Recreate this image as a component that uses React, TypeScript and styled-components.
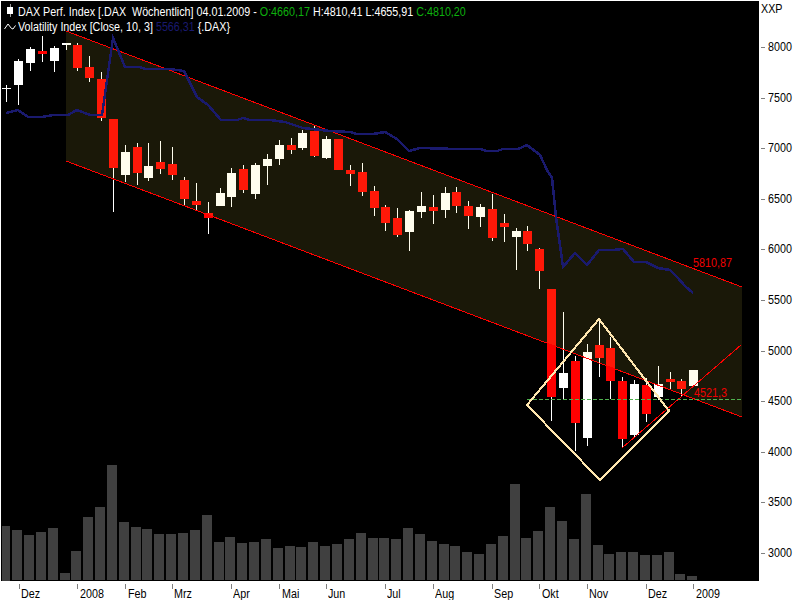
import styled, { createGlobalStyle } from "styled-components";

const GlobalStyle = createGlobalStyle`
    html, body {
        margin: 0;
        background: white;
    }
`;

const Screen = styled.div`
    width: 799px;
    height: 599px;
    padding: 1px 0 0 1px;
    display: grid;
    grid-template-columns: 758px 41px;
    grid-template-rows: 580px 19px;
    background: white;
    color: black;
    font-family: "Liberation Sans", Arial, sans-serif;
    font-size: 12px;
    line-height: 15px;
    overflow: hidden;
`;

const Plot = styled.div`
    position: relative;
    background: black;
    overflow: hidden;
`;

const ChartSvg = styled.svg`
    display: block;
    shape-rendering: crispEdges;
`;

const Legend = styled.div`
    position: absolute;
    top: 2px;
    left: 3px;
    display: flex;
    flex-direction: column;
    color: white;
    white-space: pre;
`;

const LegendRow = styled.div`
    display: flex;
    align-items: center;
    gap: 2px;
    height: 15px;
`;

const LegendIcon = styled.svg`
    flex: none;
    width: 12px;
    height: 13px;
`;

// the reference font runs narrower than Arial at the same height
const Narrow = styled.span`
    display: inline-block;
    transform: scaleX(0.895);
    transform-origin: left center;
`;

const LegendText = styled(Narrow)`
    position: relative;
    top: 2px;
`;

const Open = styled.span`
    color: #0db10d;
`;

const Navy = styled.span`
    color: #1a1a6e;
`;

const Note = styled.text`
    fill: #f00000;
    font-size: 12px;
    font-family: "Liberation Sans", Arial, sans-serif;
`;

const PriceAxis = styled.div`
    position: relative;
`;

const Unit = styled(Narrow)`
    position: absolute;
    top: 1px;
    left: 2px;
`;

const PriceMark = styled.div`
    position: absolute;
    left: 2px;
    display: flex;
    align-items: center;
    gap: 3px;
    height: 15px;
    &::before {
        content: "";
        width: 4px;
        height: 1px;
        background: #808080;
    }
`;

const TimeAxis = styled.div`
    position: relative;
    grid-column: 1 / 3;
`;

const TimeMark = styled.div`
    position: absolute;
    top: 3px;
    width: 1px;
    height: 5px;
    background: #808080;
`;

const TimeLabel = styled(Narrow)`
    position: absolute;
    top: 6px;
`;

// x, wick top, body top, body bottom, wick bottom, rising
type Candle = [number, number, number, number, number, boolean];

const candles: Candle[] = [
    [18, 59, 61, 85, 105, true], [30, 47, 49, 63, 71, true], [42, 36, 51, 54, 62, false],
    [54, 46, 48, 61, 72, true], [77, 43, 45, 68, 71, false], [89, 56, 67, 78, 82, false],
    [101, 72, 79, 118, 121, false], [113, 119, 119, 168, 212, false], [125, 145, 152, 175, 182, true],
    [137, 143, 147, 173, 185, false], [148, 143, 166, 178, 181, true], [160, 141, 162, 169, 174, false],
    [172, 147, 164, 175, 180, false], [184, 177, 180, 199, 205, false], [196, 183, 201, 205, 210, false],
    [208, 202, 213, 218, 234, false], [220, 188, 193, 206, 206, true], [231, 168, 173, 197, 207, true],
    [243, 165, 169, 190, 193, false], [255, 163, 165, 194, 199, true], [267, 154, 159, 166, 185, true],
    [279, 140, 145, 159, 165, true], [291, 138, 145, 150, 154, false], [302, 130, 133, 148, 150, true],
    [314, 126, 131, 156, 157, false], [326, 136, 139, 158, 159, true], [338, 139, 139, 170, 170, false],
    [350, 165, 170, 174, 186, false], [362, 163, 172, 192, 196, false], [374, 186, 191, 208, 216, false],
    [385, 205, 207, 223, 231, false], [397, 208, 218, 235, 237, false], [409, 210, 211, 232, 251, true],
    [421, 192, 206, 212, 218, true], [433, 195, 207, 211, 224, false], [445, 187, 193, 210, 218, true],
    [456, 187, 192, 206, 213, false], [468, 201, 206, 216, 229, false], [480, 204, 207, 217, 227, true],
    [492, 194, 209, 238, 241, false], [504, 214, 223, 227, 242, false], [516, 228, 231, 237, 270, true],
    [527, 226, 231, 244, 251, false], [539, 248, 249, 271, 289, false], [551, 289, 289, 397, 421, false],
    [563, 312, 373, 388, 400, true], [575, 356, 361, 423, 451, false], [587, 344, 352, 438, 446, true],
    [599, 318, 345, 358, 377, false], [610, 337, 348, 381, 399, false], [622, 377, 381, 439, 448, false],
    [634, 380, 384, 435, 437, true], [646, 378, 385, 414, 422, false], [658, 366, 384, 397, 400, true],
    [670, 372, 379, 382, 389, false], [681, 379, 381, 389, 397, false], [693, 370, 370, 386, 386, true],
];

// left edge, top of each volume bar
const volumes: [number, number][] = [
    [12, 530], [24, 535], [36, 532], [48, 528], [60, 573], [71, 551], [83, 517], [95, 507], [107, 465],
    [119, 522], [131, 527], [142, 529], [154, 534], [166, 534], [178, 533], [190, 530], [202, 515],
    [214, 542], [225, 537], [237, 543], [249, 542], [261, 539], [273, 548], [285, 546], [296, 547],
    [308, 542], [320, 546], [332, 544], [344, 539], [356, 533], [368, 538], [379, 538], [391, 539],
    [403, 528], [415, 534], [427, 541], [439, 544], [450, 546], [462, 552], [474, 554], [486, 544],
    [498, 536], [510, 484], [521, 538], [533, 531], [545, 507], [557, 521], [569, 539], [581, 494],
    [593, 545], [604, 554], [616, 552], [628, 552], [640, 555], [652, 555], [664, 552], [675, 574],
    [687, 576],
];

const blueLine = "6,113 18,110 28,117 42,117 53,115 68,115 77,110 90,115 102,115 113,38 125,67 140,67 145,69 170,69 184,71 197,97 208,105 221,120 237,120 243,118 250,120 270,120 285,122 303,128 330,131 350,132 357,134 373,134 385,132 397,139 409,151 420,148 457,149 480,149 487,151 497,151 503,149 518,149 527,145 540,155 547,170 552,178 556,217 563,267 575,253 587,265 599,250 613,250 623,249 634,262 646,262 658,268 670,270 677,277 685,286 693,293";

const prices = [8000, 7500, 7000, 6500, 6000, 5500, 5000, 4500, 4000, 3500, 3000];

const months: [number, number, string][] = [
    [19, 21, "Dez"], [77, 80, "2008"], [125, 128, "Feb"], [172, 174, "Mrz"], [231, 233, "Apr"],
    [279, 282, "Mai"], [326, 328, "Jun"], [385, 387, "Jul"], [433, 435, "Aug"], [492, 494, "Sep"],
    [539, 542, "Okt"], [587, 589, "Nov"], [646, 648, "Dez"], [693, 696, "2009"],
];

function App() {
    return <Screen>
        <GlobalStyle />
        <Plot>
            <ChartSvg width={758} height={580} viewBox="1 1 758 580">
                <rect x={2} y={526} width={8} height={55} fill="#404040" />
                {volumes.map(([x, top]) =>
                    <rect key={x} x={x} y={top} width={10} height={580 - top} fill="#404040" />
                )}
                <rect x={6} y={85} width={1} height={17} fill="white" />
                <rect x={2} y={88} width={9} height={1} fill="white" />
                <rect x={66} y={43} width={1} height={7} fill="white" />
                <rect x={62} y={43} width={9} height={2} fill="white" />
                {candles.map(([x, wickTop, , , wickBottom]) =>
                    <rect key={x} x={x} y={wickTop} width={1} height={wickBottom - wickTop} fill="white" />
                )}
                {candles.map(([x, , top, bottom, , up]) =>
                    <rect key={x} x={x - 4} y={top} width={9} height={bottom - top} fill={up ? "white" : "#ff0000"} />
                )}
                <polygon points="66,31 742,287 742,417 66,161" fill="rgb(255,240,80)" fillOpacity={0.1} />
                <line x1={66} y1={31} x2={742} y2={287} stroke="#ff0000" />
                <line x1={66} y1={161} x2={742} y2={417} stroke="#ff0000" />
                <line x1={622} y1={448} x2={741} y2={345} stroke="#ff0000" />
                <line x1={527} y1={399} x2={742} y2={399} stroke="#4fb14f" strokeDasharray="4 2" />
                <polyline points={blueLine} fill="none" stroke="#1a1a6e" strokeWidth={2.5} />
                <polygon points="527,405 599,319 669,411 600,480" fill="none" stroke="#ffe6ae" strokeWidth={2.1} />
                <rect x={667} y={409} width={3} height={3} fill="#ffe6ae" />
                <Note x={693} y={267} textLength={39} lengthAdjust="spacingAndGlyphs">5810,87</Note>
                <Note x={694} y={397} textLength={33} lengthAdjust="spacingAndGlyphs">4521,3</Note>
            </ChartSvg>
            <Legend>
                <LegendRow>
                    <LegendIcon viewBox="0 0 12 13">
                        <rect x="6" y="0" width="1" height="13" fill="#a0a0a0" />
                        <rect x="3" y="3" width="6" height="7" fill="white" />
                    </LegendIcon>
                    <LegendText>DAX Perf. Index [.DAX  Wöchentlich] 04.01.2009 - <Open>O:4660,17</Open> H:4810,41 L:4655,91 <Open>C:4810,20</Open></LegendText>
                </LegendRow>
                <LegendRow>
                    <LegendIcon viewBox="0 0 12 13">
                        <path d="M0.5 10 L4 5 L7.5 9.5 L9 10 L11.5 6.5" fill="none" stroke="white" />
                    </LegendIcon>
                    <LegendText>Volatility Index [Close, 10, 3] <Navy>5566,31</Navy> {"{.DAX}"}</LegendText>
                </LegendRow>
            </Legend>
        </Plot>
        <PriceAxis>
            <Unit>XXP</Unit>
            {prices.map((price, i) =>
                <PriceMark key={price} style={{ top: 39 + i * 50.6 }}><Narrow>{price}</Narrow></PriceMark>
            )}
        </PriceAxis>
        <TimeAxis>
            {months.map(([tick, left, label]) =>
                <div key={tick}>
                    <TimeMark style={{ left: tick - 1 }} />
                    <TimeLabel style={{ left: left - 1 }}>{label}</TimeLabel>
                </div>
            )}
        </TimeAxis>
    </Screen>
}
export default App;
